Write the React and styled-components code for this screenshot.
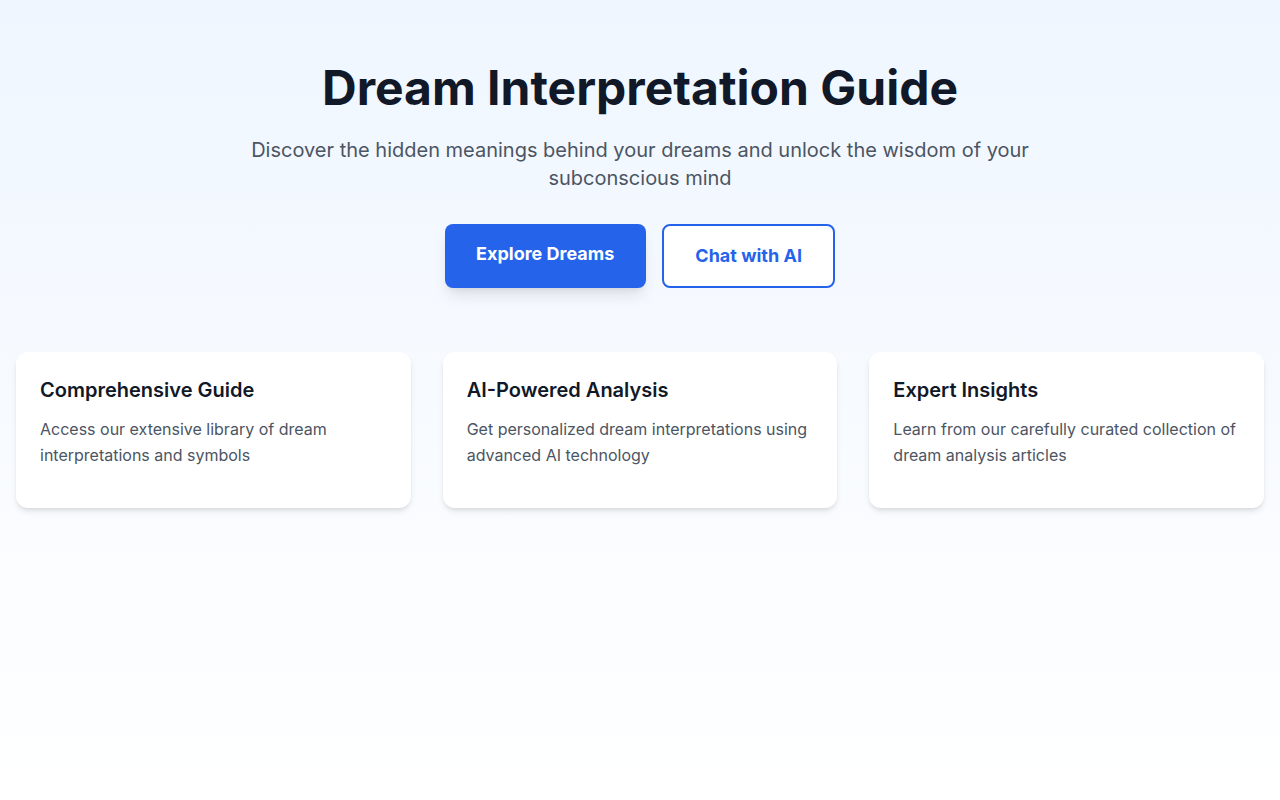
import React from 'react';
import styled, { createGlobalStyle } from 'styled-components';

const GlobalStyle = createGlobalStyle`
  * {
    box-sizing: border-box;
  }

  body {
    margin: 0;
    font-family: Inter, "Noto Sans", sans-serif;
    -webkit-font-smoothing: antialiased;
  }
`;

const Page = styled.div`
  min-height: 100vh;
  background: linear-gradient(to bottom, #eff6ff, #ffffff);
  padding: 64px 16px;
`;

const Hero = styled.section`
  display: flex;
  flex-direction: column;
  align-items: center;
  text-align: center;
  margin-bottom: 64px;
`;

const Title = styled.h1`
  margin: 0 0 24px;
  font-size: 48px;
  line-height: 48px;
  font-weight: 700;
  color: #111827;
`;

const Subtitle = styled.p`
  margin: 0 0 32px;
  max-width: 800px;
  font-size: 20px;
  line-height: 28px;
  color: #4b5563;
`;

const Actions = styled.div`
  display: flex;
  gap: 16px;
  justify-content: center;
`;

const Button = styled.button`
  font-family: inherit;
  font-size: 18px;
  line-height: 28px;
  font-weight: 700;
  height: 64px;
  padding: ${(p) => (p.$primary ? '16px 31.5px 20px' : '16px 31.5px')};
  border-radius: 8px;
  cursor: pointer;
  border: ${(p) => (p.$primary ? 'none' : '2px solid #2563eb')};
  background: ${(p) => (p.$primary ? '#2563eb' : '#ffffff')};
  color: ${(p) => (p.$primary ? '#ffffff' : '#2563eb')};
  box-shadow: ${(p) =>
    p.$primary
      ? '0 10px 15px -3px rgba(0, 0, 0, 0.1), 0 4px 6px -4px rgba(0, 0, 0, 0.1)'
      : 'none'};
`;

const Cards = styled.div`
  display: grid;
  grid-template-columns: repeat(3, 1fr);
  gap: 32px;
`;

const Card = styled.div`
  background: #ffffff;
  border-radius: 12px;
  padding: 24px;
  box-shadow: 0 4px 6px -1px rgba(0, 0, 0, 0.1), 0 2px 4px -2px rgba(0, 0, 0, 0.1);

  h3 {
    margin: 0 0 12px;
    font-size: 20px;
    line-height: 28px;
    font-weight: 600;
    color: #111827;
  }

  p {
    margin: 0 0 16px;
    font-size: 16px;
    line-height: 26px;
    color: #4b5563;
  }
`;

const features = [
  {
    title: 'Comprehensive Guide',
    text: 'Access our extensive library of dream interpretations and symbols',
  },
  {
    title: 'AI-Powered Analysis',
    text: 'Get personalized dream interpretations using advanced AI technology',
  },
  {
    title: 'Expert Insights',
    text: 'Learn from our carefully curated collection of dream analysis articles',
  },
];

const App = () => {
  return (
    <>
      <GlobalStyle />
      <Page>
        <Hero>
          <Title>Dream Interpretation Guide</Title>
          <Subtitle>
            Discover the hidden meanings behind your dreams and unlock the wisdom of your
            subconscious mind
          </Subtitle>
          <Actions>
            <Button $primary>Explore Dreams</Button>
            <Button>Chat with AI</Button>
          </Actions>
        </Hero>
        <Cards>
          {features.map((f) => (
            <Card key={f.title}>
              <h3>{f.title}</h3>
              <p>{f.text}</p>
            </Card>
          ))}
        </Cards>
      </Page>
    </>
  );
};

export default App;
